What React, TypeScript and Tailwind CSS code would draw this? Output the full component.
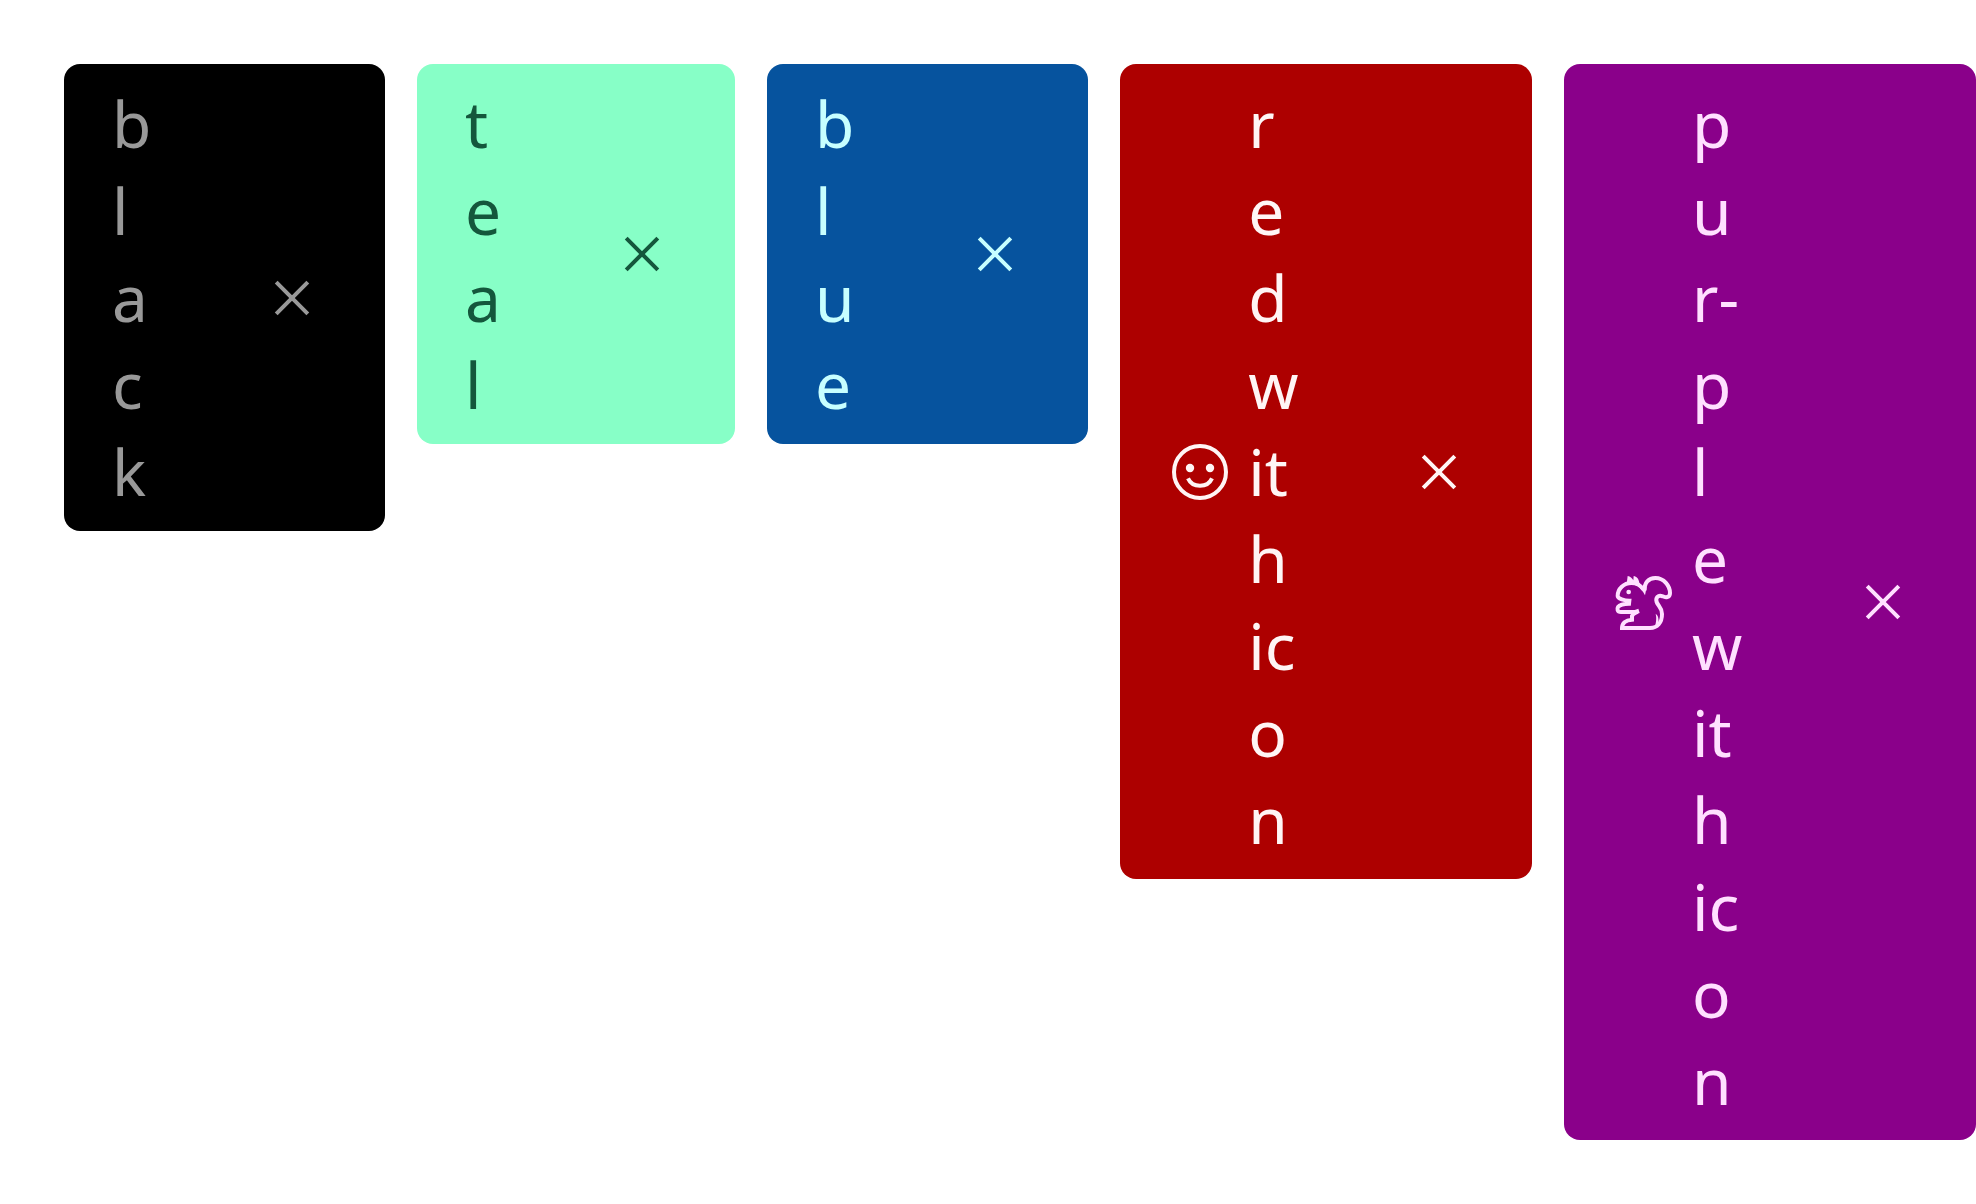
import type { ReactNode } from "react";

function CloseIcon() {
  return (
    <svg viewBox="0 0 64 64" className="size-16 shrink-0" fill="none" stroke="currentColor" strokeWidth="4" aria-hidden="true">
      <path d="M16.2 16.2 47.8 47.8M47.8 16.2 16.2 47.8" />
    </svg>
  );
}

function SmileIcon() {
  return (
    <svg viewBox="0 0 64 64" className="mr-4 size-16 shrink-0" fill="none" stroke="currentColor" strokeWidth="4" aria-hidden="true">
      <circle cx="32" cy="32" r="26" />
      <circle cx="22" cy="28" r="4.2" fill="currentColor" stroke="none" />
      <circle cx="42" cy="28" r="4.2" fill="currentColor" stroke="none" />
      <path d="M20 38.4C22 42.8 26.6 45.8 32 45.8S42 42.8 44 38.4" />
    </svg>
  );
}

function SquirrelIcon() {
  return (
    <svg viewBox="0 0 192 192" className="mr-4 size-16 shrink-0" fill="none" stroke="currentColor" strokeWidth="12" aria-hidden="true">
      <path d="M98 62C96 38 110 24 130 24C156 24 174 48 174 69C174 84 160 83 152 79C138 73 130 84 134 96C138 108 150 112 150 132C150 158 136 174 114 174H30C30 160 40 150 60 149V138C62 132 68 130 76 126H27C15 126 15 116 18 111C24 103 34 101 51 101L52 92C38 92 17 86 17 78C17 56 36 39 58 39C74 39 84 44 94 58" />
      <path d="M44 42 47 18C55 19 60 24 64 31L65 18C74 20 80 25 82 38L92 50 104 52 99 76C94 66 84 52 74 46Z" fill="currentColor" stroke="none" />
      <circle cx="50" cy="66" r="7" fill="currentColor" stroke="none" />
      <path d="M131 131C138 137 140 141 140 160L130 166C134 149 133 140 131 131Z" fill="currentColor" stroke="none" />
      <path d="M66 121 79 116 83 129 66 134Z" fill="currentColor" stroke="none" />
    </svg>
  );
}

function Tag({ name, colors, icon, children }: { name: string; colors: string; icon?: ReactNode; children: ReactNode }) {
  return (
    <li className={`flex min-w-0 items-center rounded-2xl px-12 py-4 ${colors}`}>
      {icon}
      <span className="w-min shrink-0 wrap-anywhere">{children}</span>
      <button type="button" aria-label={`Remove ${name}`} className="ml-24 flex w-[90px] items-center justify-center">
        <CloseIcon />
      </button>
    </li>
  );
}

export default function App() {
  return (
    <main className="min-h-screen overflow-hidden bg-white pt-16 pl-16 font-['Noto_Sans',sans-serif] text-[64px] leading-[87px]">
      <ul className="flex items-start gap-8">
        <Tag name="black" colors="bg-black text-[#999999]">black</Tag>
        <Tag name="teal" colors="bg-[#87ffc7] text-[#14573c]">teal</Tag>
        <Tag name="blue" colors="bg-[#06539e] text-[#c7ffff]">blue</Tag>
        <Tag name="red with icon" colors="bg-[#ad0000] text-[#fff5f5]" icon={<SmileIcon />}>red with icon</Tag>
        <Tag name="purple with icon" colors="bg-[#8a008a] text-[#ffe0ff]" icon={<SquirrelIcon />}>pur&shy;ple with icon</Tag>
      </ul>
    </main>
  );
}
